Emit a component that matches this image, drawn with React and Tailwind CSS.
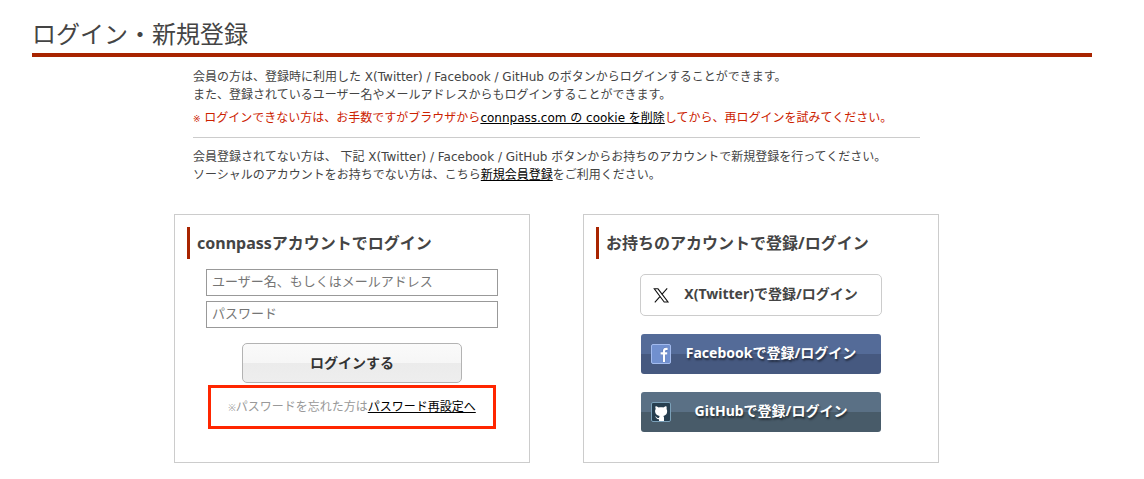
import clsx from 'clsx';

function XIcon() {
    return (
        <svg viewBox="0 0 20 20" className="w-5 h-5 shrink-0" aria-hidden="true">
            <path d="M3.3 3.8H7L17 17H13.2Z" fill="#fff" stroke="#111" strokeWidth="1.1" />
            <path d="M16.2 3.3L10.9 9.3M8.9 11.6L3.8 17.3" fill="none" stroke="#111" strokeWidth="1.1" />
        </svg>
    );
}

function FacebookIcon() {
    return (
        <svg viewBox="0 0 20 20" className="w-5 h-5 shrink-0" aria-hidden="true">
            <rect x="0.5" y="0.5" width="19" height="19" rx="1.5" fill="#7190cf" stroke="#a3bbee" />
            <path d="M16.6 4.9H15.2C13.6 4.9 13 5.7 13 7.2V18M9.6 9.4H16.2" fill="none" stroke="#5a79ba" strokeWidth="3.4" />
            <path d="M16.6 4.9H15.2C13.6 4.9 13 5.7 13 7.2V18M9.6 9.4H16.2" fill="none" stroke="#fff" strokeWidth="2.2" />
        </svg>
    );
}

function GitHubIcon() {
    return (
        <svg viewBox="0 0 20 20" className="w-5 h-5 shrink-0" aria-hidden="true">
            <rect x="0.5" y="0.5" width="19" height="19" rx="1.5" fill="#263e4f" stroke="#7ba0b8" />
            <path
                d="M4.5 4.2C5.8 4.2 6.8 4.8 7.6 5.5C9.2 5.1 10.9 5.1 12.4 5.5C13.2 4.8 14.2 4.2 15.3 4.2C15.8 5.3 15.8 6.2 15.5 7C16.2 8 16.3 9.2 16 10.5C15.6 12.7 14.2 13.5 12.3 13.9C12.9 14.5 13 15 13 15.8V19H8V17.2C6 17.5 5.5 16.5 5 15.6C4.7 15 4.2 14.8 3.9 14.5C5.4 14.1 6 15.6 6.8 15.9C7.3 16.1 7.8 16 8.1 15.8C8.1 15 8.3 14.3 8.7 13.9C6.2 13.5 4.7 12.4 4.2 10.3C3.9 9 4.1 7.9 4.7 7C4.3 6 4.2 5.1 4.5 4.2Z"
                fill="#fff"
            />
        </svg>
    );
}

function Panel({ title, children }) {
    return (
        <section className="flex-1 border border-[#ccc] px-3 pt-3 pb-[30px]">
            <h2 className="border-l-[3px] border-[#a82400] pl-[7px] text-base leading-8 font-bold">{title}</h2>
            {children}
        </section>
    );
}

const providers = [
    {
        label: 'X(Twitter)で登録/ログイン',
        icon: XIcon,
        className: 'h-[42px] w-[242px] rounded-[5px] border border-[#ccc] bg-white text-[#444]',
    },
    {
        label: 'Facebookで登録/ログイン',
        icon: FacebookIcon,
        className:
            'h-10 w-60 rounded-[3px] bg-[linear-gradient(#546b98_50%,#465980_50%)] text-white [text-shadow:1px_2px_2px_rgba(0,0,0,0.5)]',
    },
    {
        label: 'GitHubで登録/ログイン',
        icon: GitHubIcon,
        className:
            'h-10 w-60 rounded-[3px] bg-[linear-gradient(#5a7085_50%,#485b69_50%)] text-white [text-shadow:1px_2px_2px_rgba(0,0,0,0.5)]',
    },
];

const inputClass =
    'block h-[27px] w-full border border-[#999] bg-white px-[5px] pb-[3px] text-[13px] text-[#444] outline-none placeholder:text-[#757575]';

export default function App() {
    return (
        <div className="bg-white pt-4 pr-[52px] pl-8 font-['Noto_Sans','Noto_Sans_CJK_JP',sans-serif] text-xs leading-[18px] text-[#444]">
            <h1 className="border-b-4 border-[#a82400] pb-px text-2xl leading-9">ログイン・新規登録</h1>

            <main className="pr-[11px]">
                <div className="mx-auto max-w-[765px]">
                    <div className="px-[19px] pt-[11px] font-['DejaVu_Sans','Noto_Sans_CJK_JP',sans-serif]">
                        <p>
                            会員の方は、登録時に利用した X(Twitter) / Facebook / GitHub のボタンからログインすることができます。
                            <br />
                            また、登録されているユーザー名やメールアドレスからもログインすることができます。
                        </p>
                        <p className="mt-[5px] text-[#cc2200]">
                            <span className="text-[9px]">※</span> ログインできない方は、お手数ですがブラウザから
                            <a href="#cookie" className="text-black underline">connpass.com の cookie を削除</a>
                            してから、再ログインを試みてください。
                        </p>
                        <hr className="mt-[9px] mb-[10px] border-[#ccc]" />
                        <p>
                            会員登録されてない方は、 下記 X(Twitter) / Facebook / GitHub ボタンからお持ちのアカウントで新規登録を行ってください。
                            <br />
                            ソーシャルのアカウントをお持ちでない方は、こちら
                            <a href="#signup" className="text-black underline">新規会員登録</a>
                            をご利用ください。
                        </p>
                    </div>

                    <div className="mt-[30px] flex gap-[53px]">
                        <Panel title="connpassアカウントでログイン">
                            <form className="px-[19px] pt-[10px]" onSubmit={(e) => e.preventDefault()}>
                                <input
                                    type="text"
                                    aria-label="ユーザー名、もしくはメールアドレス"
                                    placeholder="ユーザー名、もしくはメールアドレス"
                                    className={inputClass}
                                />
                                <input
                                    type="password"
                                    aria-label="パスワード"
                                    placeholder="パスワード"
                                    className={clsx(inputClass, 'mt-[5px]')}
                                />
                                <button
                                    type="submit"
                                    className="mx-auto mt-[15px] block h-10 w-[220px] rounded-[5px] border border-[#b3b3b3] bg-[linear-gradient(#fafafa,#f6f6f6_50%,#ebebeb_50%,#eeeeee)] text-sm font-bold text-[#333]"
                                >
                                    ログインする
                                </button>
                                <p className="mx-[2px] mt-[2px] border-3 border-[#ff2600] pt-[10px] pb-[9px] text-center text-[#999]">
                                    <span className="text-[9px]">※</span>パスワードを忘れた方は
                                    <a href="#reset" className="text-black underline">パスワード再設定へ</a>
                                </p>
                            </form>
                        </Panel>

                        <Panel title="お持ちのアカウントで登録/ログイン">
                            <div className="flex flex-col items-center gap-[18px] pt-[15px]">
                                {providers.map(({ label, icon: Icon, className }) => (
                                    <button
                                        key={label}
                                        type="button"
                                        className={clsx('flex items-center px-[10px] text-sm font-bold', className)}
                                    >
                                        <Icon />
                                        <span className="flex-1 pb-[3px] text-center">{label}</span>
                                    </button>
                                ))}
                            </div>
                        </Panel>
                    </div>
                </div>
            </main>
        </div>
    );
}
